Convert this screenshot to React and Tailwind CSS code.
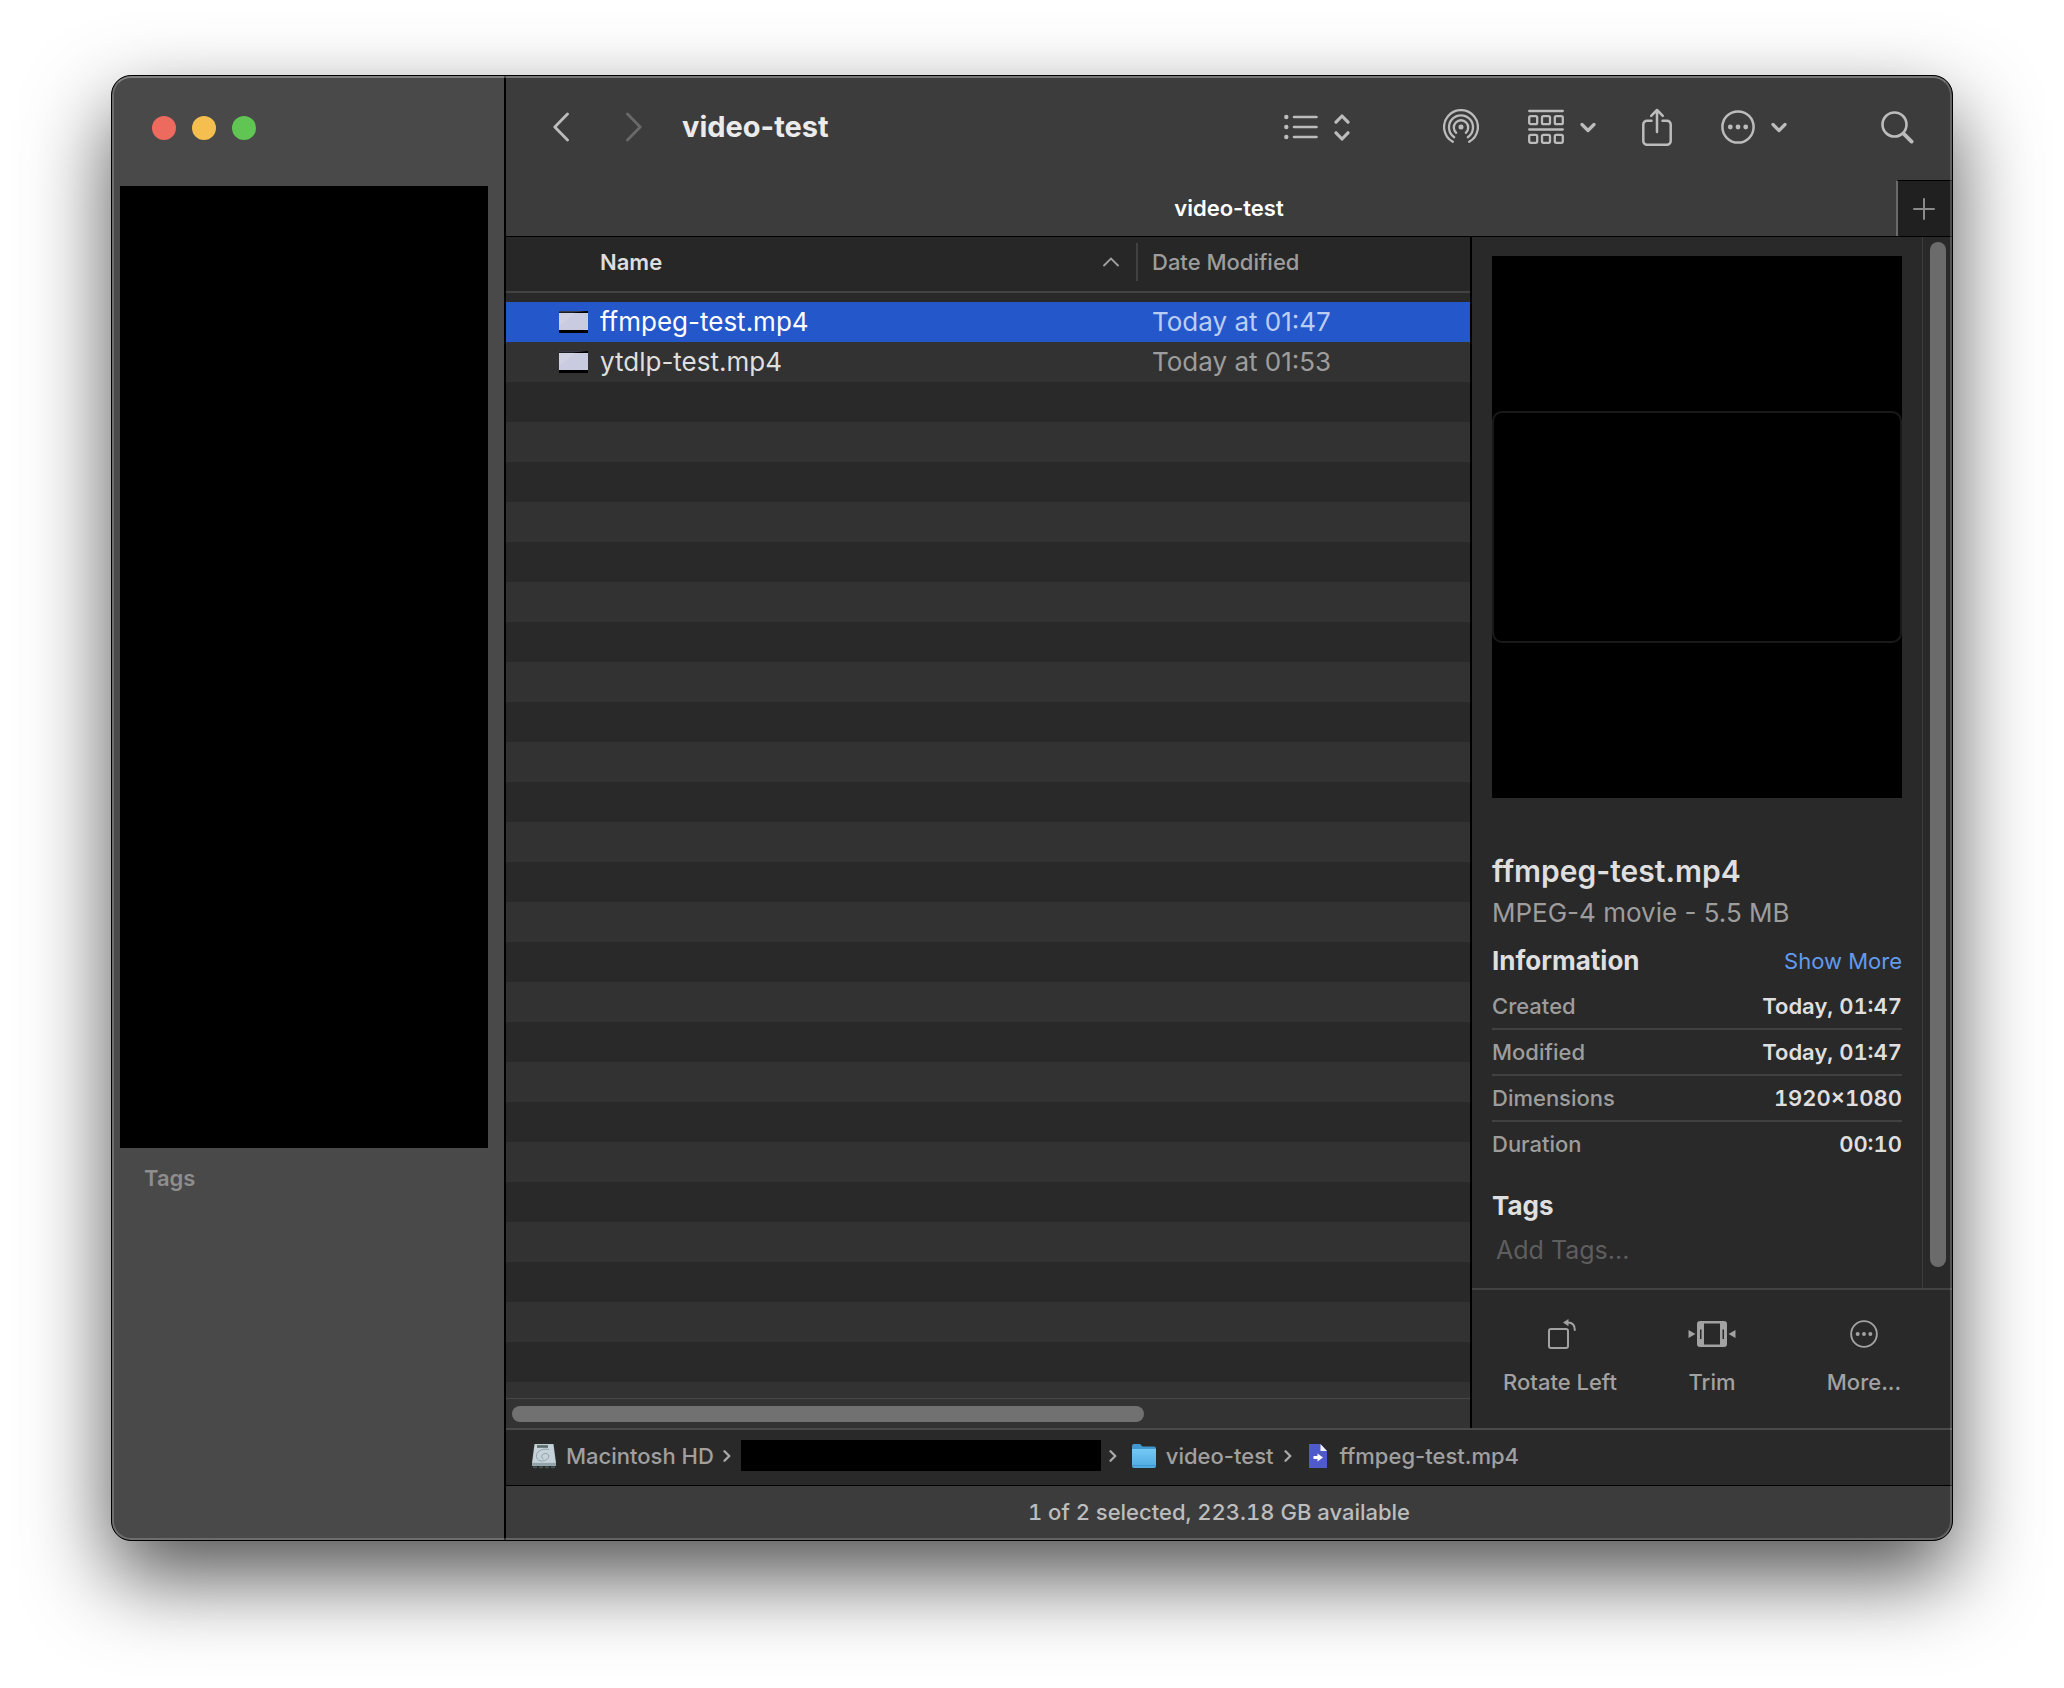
const files = [
  { name: 'ffmpeg-test.mp4', modified: 'Today at 01:47', selected: true },
  { name: 'ytdlp-test.mp4', modified: 'Today at 01:53', selected: false },
];

const details = [
  { label: 'Created', value: 'Today, 01:47' },
  { label: 'Modified', value: 'Today, 01:47' },
  { label: 'Dimensions', value: '1920×1080' },
  { label: 'Duration', value: '00:10' },
];

/* Icons */

const BackIcon = () => (
  <svg width="16" height="30" viewBox="0 0 16 30" fill="none" stroke="currentColor" strokeWidth="2.8" strokeLinecap="round" strokeLinejoin="round">
    <path d="M14.5 2 1.8 15l12.7 13" />
  </svg>
);

const ForwardIcon = () => (
  <svg width="16" height="30" viewBox="0 0 16 30" fill="none" stroke="currentColor" strokeWidth="2.8" strokeLinecap="round" strokeLinejoin="round">
    <path d="M1.5 2l12.7 13L1.5 28" />
  </svg>
);

const ListIcon = () => (
  <svg width="34" height="26" viewBox="0 0 34 26" fill="none" stroke="currentColor" strokeWidth="2.6" strokeLinecap="round">
    <path d="M10 3h22.5M10 13h22.5M10 23h22.5" />
    <g fill="currentColor" stroke="none">
      <circle cx="2.3" cy="3" r="2.2" />
      <circle cx="2.3" cy="13" r="2.2" />
      <circle cx="2.3" cy="23" r="2.2" />
    </g>
  </svg>
);

const SortIcon = () => (
  <svg width="16" height="28" viewBox="0 0 16 28" fill="none" stroke="currentColor" strokeWidth="3.2" strokeLinecap="round" strokeLinejoin="round">
    <path d="M2 9.2 8 3l6 6.2M2 19.8 8 26l6-6.200" />
  </svg>
);

const DownIcon = () => (
  <svg width="16" height="12" viewBox="0 0 16 12" fill="none" stroke="currentColor" strokeWidth="3.2" strokeLinecap="round" strokeLinejoin="round">
    <path d="M2 3.5 8 9.5l6-6" />
  </svg>
);

const AirDropIcon = () => (
  <svg width="36" height="36" viewBox="0 0 36 36" fill="none" stroke="currentColor" strokeWidth="2.3" strokeLinecap="round">
    <path d="M9.800 32.800a16.900 16.900 0 1 1 16.400 0" />
    <path d="M11.200 28.200a12 12 0 1 1 13.600 0" />
    <path d="M13.200 23.800a7.200 7.200 0 1 1 9.600 0" />
    <circle cx="18" cy="18" r="2.5" fill="currentColor" stroke="none" />
  </svg>
);

const GroupIcon = () => (
  <svg width="36" height="36" viewBox="0 0 36 36" fill="none" stroke="currentColor" strokeWidth="2.3" strokeLinecap="round">
    <path d="M1.200 2h33.600M1.200 20.500h33.600" />
    <rect x="1.2" y="7.2" width="8" height="8" rx="1.5" />
    <rect x="14" y="7.2" width="8" height="8" rx="1.5" />
    <rect x="26.8" y="7.2" width="8" height="8" rx="1.5" />
    <rect x="1.2" y="25.8" width="8" height="8" rx="1.5" />
    <rect x="14" y="25.8" width="8" height="8" rx="1.5" />
    <rect x="26.8" y="25.8" width="8" height="8" rx="1.5" />
  </svg>
);

const ShareIcon = () => (
  <svg width="30" height="38" viewBox="0 0 30 38" fill="none" stroke="currentColor" strokeWidth="2.5" strokeLinecap="round" strokeLinejoin="round">
    <path d="M9.500 12.800H5a3.700 3.700 0 0 0-3.700 3.700v16.600A3.700 3.700 0 0 0 5 36.800h20a3.700 3.700 0 0 0 3.700-3.700V16.500a3.700 3.700 0 0 0-3.700-3.700h-4.500" />
    <path d="M15 24V2M9.200 7.800 15 2l5.800 5.800" />
  </svg>
);

const EllipsisIcon = ({ size, stroke }) => (
  <svg width={size} height={size} viewBox="0 0 34 34" fill="currentColor">
    <circle cx="17" cy="17" r="15.6" fill="none" stroke="currentColor" strokeWidth={stroke} />
    <circle cx="9.3" cy="17" r="2.4" />
    <circle cx="17" cy="17" r="2.4" />
    <circle cx="24.7" cy="17" r="2.4" />
  </svg>
);

const SearchIcon = () => (
  <svg width="33" height="33" viewBox="0 0 33 33" fill="none" stroke="currentColor" strokeLinecap="round">
    <circle cx="13.5" cy="13.5" r="12" strokeWidth="2.6" />
    <path d="M22.600 22.600l8 8" strokeWidth="3.8" />
  </svg>
);

const PlusIcon = () => (
  <svg width="22" height="22" viewBox="0 0 22 22" fill="none" stroke="currentColor" strokeWidth="2" strokeLinecap="round">
    <path d="M11 1v20M1 11h20" />
  </svg>
);

const AscendingIcon = () => (
  <svg width="16" height="10" viewBox="0 0 16 10" fill="none" stroke="currentColor" strokeWidth="1.8" strokeLinecap="round">
    <path d="M1 8.500l7-7 7 7" />
  </svg>
);

const CrumbIcon = () => (
  <svg width="8" height="14" viewBox="0 0 8 14" fill="none" stroke="#a9a9a9" strokeWidth="2.3" strokeLinecap="round" strokeLinejoin="round">
    <path d="M1.500 2.200 6.300 7l-4.800 4.800" />
  </svg>
);

const MovieThumb = () => (
  <svg width="30" height="24" viewBox="0 0 30 24">
    <rect y="1" width="29" height="22" fill="#000" />
    <path d="M0 1h29L14 2.500H0z" fill="#3b3b48" />
    <rect y="3" width="29" height="17" fill="#c9cbe0" />
    <path d="M0 3h16L0 16z" fill="#d0d1e2" />
  </svg>
);

const DiskIcon = () => (
  <svg width="24" height="26" viewBox="0 0 24 26">
    <path d="M2.500 1h19L24 19.500v3.500H0v-3.500z" fill="#b4c3c9" />
    <path d="M3 1.500h18l2.200 18H.8z" fill="#c5d3d8" />
    <rect x="5" y="2.2" width="11" height="2.6" fill="#5a6a6c" />
    <path d="M17 6.500C9 5 4 9 4.500 13.500S10 19 14 17s3.500-6.500-.5-6.500-5 4.500-2 5.500" fill="none" stroke="#8fa2aa" strokeWidth="1" />
    <rect y="20" width="24" height="3" fill="#93a4aa" />
    <path d="M1 24.200h22" stroke="#435254" strokeWidth="2" strokeDasharray="4 2" />
  </svg>
);

const FolderIcon = () => (
  <svg width="24" height="24" viewBox="0 0 24 24">
    <defs>
      <linearGradient id="folder" x1="0" y1="0" x2="0" y2="1">
        <stop offset="0" stopColor="#74c8f3" />
        <stop offset="1" stopColor="#4fa9e2" />
      </linearGradient>
    </defs>
    <path d="M0 2a2 2 0 0 1 2-2h6l2.500 2.500H22a2 2 0 0 1 2 2V8H0z" fill="#3f98cf" />
    <path d="M0 5h24v17a2 2 0 0 1-2 2H2a2 2 0 0 1-2-2z" fill="url(#folder)" />
    <path d="M0 21.500h24" stroke="#3f98cf" strokeWidth="1" />
  </svg>
);

const MovieFileIcon = () => (
  <svg width="20" height="24" viewBox="0 0 20 24">
    <path d="M1 0h11l7 7v17H1z" fill="#4f5acb" />
    <path d="M12.500 0l6.500 7h-6.500z" fill="#f3f3fa" />
    <path d="M5.500 12h4V9.500l5.500 4-5.500 4V15h-4z" fill="#fff" />
  </svg>
);

const RotateIcon = () => (
  <svg width="32" height="32" viewBox="-4 0 32 32" fill="none" stroke="currentColor" strokeWidth="2" strokeLinecap="round">
    <rect x="1" y="11" width="19" height="19" rx="2" />
    <path d="M20 4.500c4.500 0 7 2.800 6.800 7.500" />
    <path d="M20.500 1v7.200L15 4.600z" fill="currentColor" stroke="none" />
  </svg>
);

const TrimIcon = () => (
  <svg width="48" height="28" viewBox="0 0 48 28" fill="currentColor">
    <path d="M.5 10v8l7-4zM47.500 10v8l-7-4z" />
    <path fillRule="evenodd" d="M12 1h24a3 3 0 0 1 3 3v20a3 3 0 0 1-3 3H12a3 3 0 0 1-3-3V4a3 3 0 0 1 3-3zm4 2.500v21h16v-21zM12 9.500v9.500h1.500V9.500zM34.500 9.500v9.500H36V9.500z" />
  </svg>
);

/* Panels */

const Sidebar = () => (
  <aside className="w-[392px] shrink-0 bg-[#494949]">
    <div className="h-[110px] pl-10 pt-10 flex items-start gap-4">
      <button aria-label="Close" className="size-6 rounded-full bg-[#ed6a5f]" />
      <button aria-label="Minimize" className="size-6 rounded-full bg-[#f5bf4f]" />
      <button aria-label="Zoom" className="size-6 rounded-full bg-[#61c554]" />
    </div>
    <div className="ml-2 mr-4 h-[962px] bg-black" />
    <h2 className="mt-4 pl-8 text-[22px] leading-7 font-semibold text-[#8e8e8e]">Tags</h2>
  </aside>
);

const Toolbar = () => (
  <header className="bg-[#3c3c3c] border-b border-black">
    <div className="h-[104px] pb-0.5 pl-[47px] pr-[38px] flex items-center text-[#bcbcbc]">
      <button aria-label="Back"><BackIcon /></button>
      <button aria-label="Forward" className="ml-[57px] text-[#696969]" disabled><ForwardIcon /></button>
      <h1 className="ml-10 text-[29px] leading-9 font-bold text-[#ebebeb]">video-test</h1>
      <button aria-label="View" className="ml-auto flex items-center gap-4"><ListIcon /><SortIcon /></button>
      <button aria-label="AirDrop" className="ml-[93px]"><AirDropIcon /></button>
      <button aria-label="Group" className="ml-[49px] flex items-center gap-4"><GroupIcon /><DownIcon /></button>
      <button aria-label="Share" className="ml-[46px]"><ShareIcon /></button>
      <button aria-label="Actions" className="ml-[49px] flex items-center gap-4"><EllipsisIcon size={34} stroke={2.5} /><DownIcon /></button>
      <button aria-label="Search" className="ml-[94px]"><SearchIcon /></button>
    </div>
    <div className="h-14 grid grid-cols-[1fr_auto_1fr]">
      <button className="col-start-2 text-[22px] leading-7 font-semibold text-white">video-test</button>
      <button aria-label="New tab" className="justify-self-end w-14 pr-0.5 flex items-center justify-center bg-[#202020] border-l-2 border-l-[#6a6a6a] border-t border-t-black text-[#8a8a8a]">
        <PlusIcon />
      </button>
    </div>
  </header>
);

const FileList = () => (
  <section className="flex-1 min-w-0 flex flex-col bg-[#292929]">
    <table className="w-full table-fixed border-collapse text-left">
      <thead className="text-[22px] leading-7">
        <tr className="h-[55px] bg-[#272727] border-b-2 border-[#434343]">
          <th className="p-0 pb-1 font-semibold text-[#dedede]">
            <div className="pl-[94px] pr-[17px] flex items-center justify-between">
              Name
              <span className="text-[#a0a0a0]"><AscendingIcon /></span>
            </div>
          </th>
          <th className="w-[334px] p-0 pb-1 font-medium text-[#9d9d9d]">
            <div className="h-[38px] pl-3.5 flex items-center border-l-2 border-[#414141]">Date Modified</div>
          </th>
        </tr>
      </thead>
      <tbody className="text-[26px] leading-8">
        <tr className="h-2.5"><td colSpan={2} className="p-0" /></tr>
        {files.map((file) => (
          <tr key={file.name} className={file.selected ? 'h-10 bg-[#2457ca] text-white' : 'h-10 bg-[#323232] text-[#dfdfdf]'}>
            <td className="p-0">
              <div className="pl-[53px] flex items-center gap-[11px]">
                <MovieThumb />
                {file.name}
              </div>
            </td>
            <td className={file.selected ? 'p-0 pl-4 text-[#bccdf3]' : 'p-0 pl-4 text-[#9d9d9d]'}>{file.modified}</td>
          </tr>
        ))}
      </tbody>
    </table>
    {/* Empty striped rows below the files */}
    <div className="flex-1 bg-[repeating-linear-gradient(to_bottom,#292929_0_40px,#323232_40px_80px)]" />
    <div className="h-[30px] pt-[7px] pl-1.5 bg-[#333333] border-t border-[#484848]">
      <div className="h-4 w-[66%] rounded-full bg-[#717171]" />
    </div>
  </section>
);

const ActionButton = ({ label, children }) => (
  <button className="flex-1 flex flex-col items-center gap-[18px] text-[22px] leading-7 font-medium text-[#a2a2a2]">
    <span className="h-8 flex items-center">{children}</span>
    {label}
  </button>
);

const Preview = () => (
  <aside className="w-[482px] shrink-0 flex flex-col bg-[#292929] border-l-2 border-black">
    <div className="flex">
      <div className="flex-1 min-w-0 px-5 pt-[19px] pb-[22px]">
        <div className="h-[542px] flex items-center bg-black">
          <div className="w-full h-[232px] rounded-[10px] border-2 border-[#191919]" />
        </div>
        <h2 className="mt-[55px] text-[30px] leading-9 font-semibold text-[#dfdfdf]">ffmpeg-test.mp4</h2>
        <p className="mt-2 text-[26px] leading-8 text-[#9d9d9d]">MPEG-4 movie - 5.5 MB</p>
        <div className="mt-4 flex items-center justify-between">
          <h3 className="text-[26px] leading-8 font-bold text-[#dfdfdf]">Information</h3>
          <a href="#more" className="text-[22px] leading-7 text-[#619bee]">Show More</a>
        </div>
        <dl className="mt-[7px] text-[22px] leading-7 divide-y-2 divide-[#414141]">
          {details.map((item) => (
            <div key={item.label} className="py-2 flex justify-between">
              <dt className="font-medium text-[#9d9d9d]">{item.label}</dt>
              <dd className="font-semibold tabular-nums text-[#dfdfdf]">{item.value}</dd>
            </div>
          ))}
        </dl>
        <label htmlFor="tags" className="mt-6 block text-[26px] leading-8 font-bold text-[#dfdfdf]">Tags</label>
        <input id="tags" placeholder="Add Tags..." className="mt-3 block w-full h-8 pl-1 text-[25px] leading-8 bg-transparent outline-none placeholder:text-[#5e5e5e]" />
      </div>
      <div className="w-[30px] pl-[7px] pt-[5px] pb-[21px] flex border-l border-[#3b3b3b]">
        <div className="w-4 rounded-full bg-[#6b6b6b]" />
      </div>
    </div>
    <div className="h-[140px] px-3 pt-7 flex items-start border-t-2 border-[#424242]">
      <ActionButton label="Rotate Left"><RotateIcon /></ActionButton>
      <ActionButton label="Trim"><TrimIcon /></ActionButton>
      <ActionButton label="More..."><EllipsisIcon size={28} stroke={2.3} /></ActionButton>
    </div>
  </aside>
);

const PathBar = () => (
  <nav aria-label="Path" className="h-[57px] pl-[26px] pb-1 flex items-center text-[22px] leading-7 font-medium text-[#a0a0a0] bg-[#292929] border-t-2 border-[#4a4a4a]">
    <DiskIcon />
    <a href="#disk" className="ml-2.5 mr-[9px]">Macintosh HD</a>
    <CrumbIcon />
    <span className="ml-2.5 mr-2 w-[360px] h-[31px] bg-black" />
    <CrumbIcon />
    <span className="ml-[15px]"><FolderIcon /></span>
    <a href="#folder" className="ml-2.5 mr-2.5">video-test</a>
    <CrumbIcon />
    <span className="ml-4"><MovieFileIcon /></span>
    <a href="#file" className="ml-3">ffmpeg-test.mp4</a>
  </nav>
);

const App = () => (
  <div className="bg-white px-[111px] pt-[75px] pb-[147px] font-['Inter','Noto_Sans',sans-serif]">
    <main className="relative flex rounded-[20px] border border-black overflow-hidden bg-black shadow-[0_36px_84px_rgba(0,0,0,0.68)]">
      <Sidebar />
      <div className="ml-0.5 flex-1 min-w-0 flex flex-col">
        <Toolbar />
        <div className="flex">
          <FileList />
          <Preview />
        </div>
        <PathBar />
        <footer className="h-[55px] pt-3 pr-5 text-center text-[22px] leading-7 font-medium tabular-nums text-[#bdbdbd] bg-[#3c3c3c] border-t border-black">
          1 of 2 selected, 223.18 GB available
        </footer>
      </div>
      {/* Light rim along the window edge */}
      <div className="absolute inset-0 rounded-[19px] border-2 border-white/20 border-t-white/30 pointer-events-none" />
    </main>
  </div>
);

export default App;
